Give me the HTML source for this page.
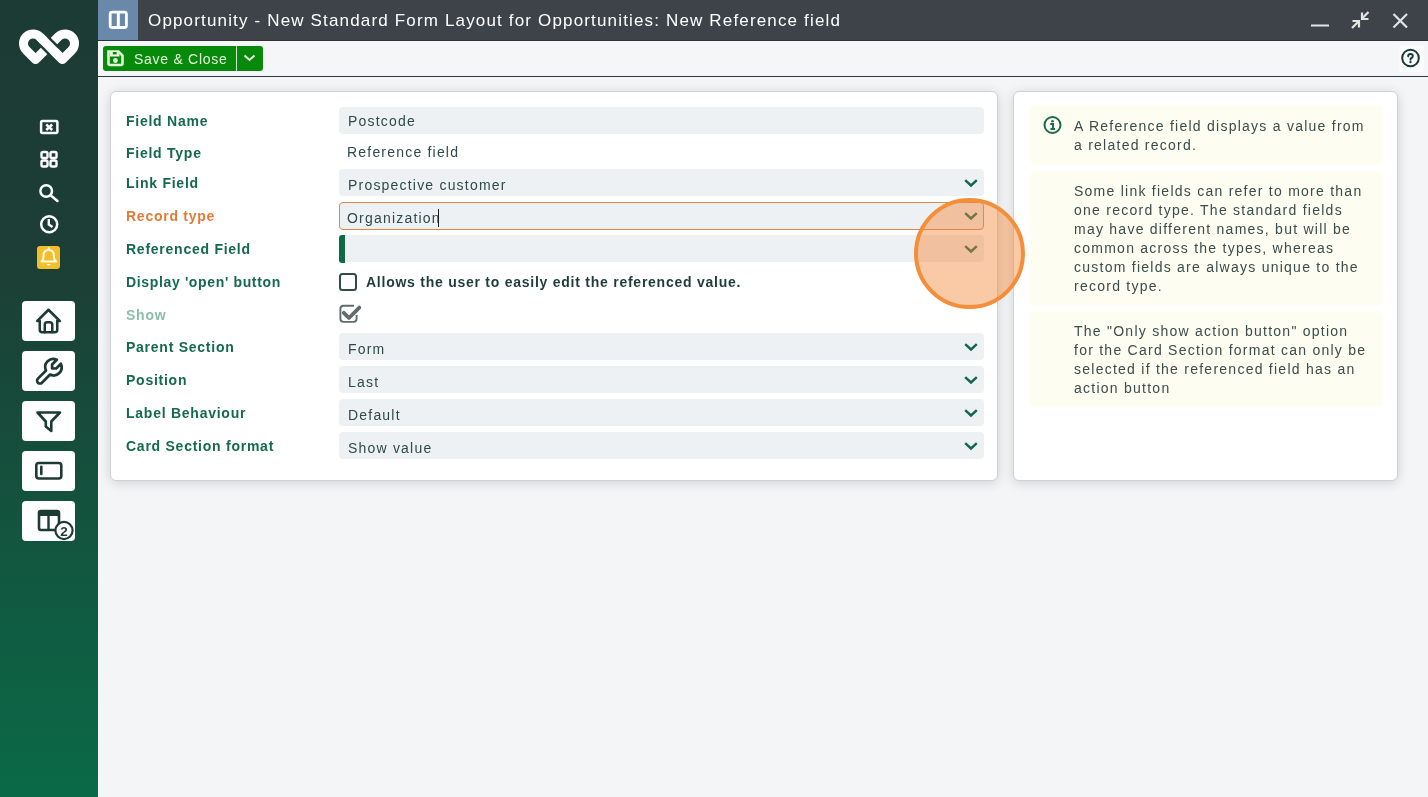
<!DOCTYPE html>
<html><head><meta charset="utf-8">
<style>
*{box-sizing:border-box;margin:0;padding:0}
html,body{width:1428px;height:797px;overflow:hidden;background:#f4f5f7;will-change:transform;font-family:"Liberation Sans",sans-serif}
.abs{position:absolute}
svg{position:absolute;overflow:visible}
#side{position:absolute;left:0;top:0;width:98px;height:797px;background:linear-gradient(#1c3b34 0%,#1c3e35 32%,#0a6a48 100%)}
.sbtn{position:absolute;left:22px;width:53px;height:40px;background:#fff;border-radius:4px}
#title{position:absolute;left:98px;top:0;width:1330px;height:40px;background:#3e434a}
#tblock{position:absolute;left:0;top:0;width:40px;height:40px;background:#6a88a9}
#ttext{position:absolute;left:50px;top:11px;color:#fff;font-size:17px;white-space:nowrap;letter-spacing:1.16px}
#toolbar{position:absolute;left:98px;top:40px;width:1330px;height:37px;background:#f5f6f7;border-top:1px solid #2e3434;border-bottom:1px solid #2e3a3a}
.btn{position:absolute;left:5px;top:5px;height:25px;width:160px;background:#078a0c;border-radius:3px}
.card{position:absolute;top:91px;height:390px;background:#fff;border:1px solid #cfd1d4;border-radius:6px;box-shadow:0 2px 12px rgba(0,0,0,.15)}
#c1{left:110px;width:888px}
#c2{left:1013px;width:385px}
.lab{position:absolute;left:126px;font-size:14px;font-weight:bold;color:#156a4c;white-space:nowrap;line-height:16px;letter-spacing:0.75px}
.inp{position:absolute;left:339px;width:645px;height:27px;background:#eef1f4;border-radius:4px}
.val{position:absolute;left:348px;font-size:14px;color:#2f4a4a;white-space:nowrap;line-height:16px;letter-spacing:1.2px}
.chev{position:absolute;left:964px;width:14px;height:8px}
.note{position:absolute;left:1030px;width:352px;background:#fdfdf1;border-radius:6px;box-shadow:0 0 3px 1px #fdfdf4}
.nt{position:absolute;left:1074px;font-size:14px;line-height:19px;color:#3b4d4c;white-space:nowrap;letter-spacing:1.25px}
</style></head><body>
<div id="side">
<svg width="98" height="80" style="left:0;top:0.8px">
<path d="M35.57,58.5 L26.28,49.22 A9.5,9.5 0 0 1 39.72,35.78 L62.43,58.5 L71.72,49.22 A9.5,9.5 0 0 0 58.28,35.78 Z" fill="none" stroke="#fff" stroke-width="9" stroke-linejoin="round"/>
<path d="M44,40 L54,50" stroke="#1c3b34" stroke-width="14"/>
<path d="M40,36 L62.43,58.5" stroke="#fff" stroke-width="9"/>
</svg>

<svg width="98" height="300" style="left:0;top:0">
<rect x="41.1" y="121.1" width="16.3" height="11.8" rx="1.5" fill="none" stroke="#fff" stroke-width="2.5"/>
<path d="M46.2,124.5 L52.2,130 M52.2,124.5 L46.2,130" stroke="#fff" stroke-width="2.5"/>
<rect x="41.5" y="152" width="6" height="6" rx="1.5" fill="none" stroke="#fff" stroke-width="2.4"/>
<rect x="50.5" y="152" width="6" height="6" rx="1.5" fill="none" stroke="#fff" stroke-width="2.4"/>
<rect x="41.5" y="160.5" width="6" height="6" rx="1.5" fill="none" stroke="#fff" stroke-width="2.4"/>
<rect x="50.5" y="160.5" width="6" height="6" rx="1.5" fill="none" stroke="#fff" stroke-width="2.4"/>
<circle cx="46.2" cy="191" r="5.8" fill="none" stroke="#fff" stroke-width="2.5"/>
<path d="M50.5,195.3 L57.5,201" stroke="#fff" stroke-width="2.5" stroke-linecap="round"/>
<circle cx="49.2" cy="224.2" r="8" fill="none" stroke="#fff" stroke-width="2.5"/>
<path d="M48.8,219 V224.5 L52.5,227" fill="none" stroke="#fff" stroke-width="2.4"/>
<rect x="37" y="246" width="23" height="23" rx="3" fill="#f2be2c"/>
<path d="M41.5,261.5 Q43.6,259.5 43.6,256 V255.3 Q43.6,250 48.7,250 Q53.8,250 53.8,255.3 V256 Q53.8,259.5 56,261.5 Z" fill="none" stroke="#fffbe0" stroke-width="2" stroke-linejoin="round"/>
<path d="M48.7,248.3 V250" stroke="#fffbe0" stroke-width="2" stroke-linecap="round"/>
<path d="M46.3,264 Q48.7,267 51.1,264 Z" fill="#fffbe0"/>
</svg>
<div class="sbtn" style="top:301px"></div>
<div class="sbtn" style="top:351px"></div>
<div class="sbtn" style="top:401px"></div>
<div class="sbtn" style="top:451px"></div>
<div class="sbtn" style="top:501px"></div>
<svg width="98" height="560" style="left:0;top:0">
<g fill="none" stroke="#1e3a35" stroke-width="2.5" stroke-linejoin="round" stroke-linecap="round">
<g transform="translate(33.5,306) scale(1.25)" stroke-width="2"><path d="M5 12l-2 0l9 -9l9 9l-2 0"/><path d="M5 12v7a2 2 0 0 0 2 2h10a2 2 0 0 0 2 -2v-7"/><path d="M9 21v-6a2 2 0 0 1 2 -2h2a2 2 0 0 1 2 2v6"/></g>
<g transform="translate(65.6,355) scale(-1.35,1.35)" stroke-width="2"><path d="M7 10h3v-3l-3.5 -3.5a6 6 0 0 1 8 8l6 6a2 2 0 0 1 -3 3l-6 -6a6 6 0 0 1 -8 -8l3.5 3.5"/></g>
<path d="M37.5,412.5 H60 L51.3,421.5 V431 L45.8,426.5 V421.5 Z" stroke-width="2.6"/>
<rect x="36.3" y="463" width="25" height="15.5" rx="2.5" stroke-width="2.6"/>
<path d="M41.3,466.8 V474" stroke-width="2.6"/>
</g>
<rect x="39" y="511" width="20" height="19" rx="2" fill="none" stroke="#1e3a35" stroke-width="2.6"/>
<rect x="39" y="511" width="20" height="5" fill="#1e3a35"/>
<path d="M48.5,515 V530" stroke="#1e3a35" stroke-width="2.4"/>
<circle cx="64" cy="530.5" r="8.6" fill="#fff" stroke="#1e3a35" stroke-width="2.2"/>
<text x="64" y="535.5" font-family="Liberation Sans" font-weight="bold" font-size="13.5" fill="#1e3a35" text-anchor="middle">2</text>
</svg>
</div>
<div id="title"><div id="tblock"></div><svg width="1330" height="40" style="left:0;top:0">
<rect x="12.2" y="12.1" width="16.2" height="15.4" rx="2" fill="none" stroke="#fff" stroke-width="2.8"/>
<path d="M20.3,12 V27" stroke="#fff" stroke-width="3"/>
<path d="M1213,25.5 H1231" stroke="#e4e4e4" stroke-width="2"/>
<g stroke="#e4e4e4" stroke-width="2.2" fill="none">
<path d="M1254,28 L1260.5,21.5 M1254.5,21 H1261 V27.5"/>
<path d="M1270.5,12 L1264,18.5 M1264,12.5 V19 H1270.5"/>
<path d="M1295.5,14 L1309,27.5 M1309,14 L1295.5,27.5"/>
</g>
</svg><div id="ttext">Opportunity - New Standard Form Layout for Opportunities: New Reference field</div></div>
<div id="toolbar"><div class="btn"></div>
<div class="abs" style="left:138px;top:5px;width:1px;height:25px;background:#cfe9c8"></div>
<svg width="200" height="38" style="left:0;top:0">
<path d="M10.5,10.5 H20.5 L24.5,14.5 V22.5 Q24.5,24 23,24 H12 Q10.5,24 10.5,22.5 Z" fill="none" stroke="#e2f8d8" stroke-width="2.6"/>
<path d="M12,11 H21.5 V15.5 H12 Z" fill="#e2f8d8"/>
<rect x="14.8" y="11" width="3.8" height="2.4" fill="#078a0c"/>
<circle cx="17.4" cy="19.5" r="2.4" fill="#e2f8d8"/>
<path d="M146.5,14.5 L151.5,19 L156.5,14.5" fill="none" stroke="#e6f7da" stroke-width="2"/>
<rect x="1301.5" y="5" width="24.5" height="26" fill="#fcfdfd"/>
<circle cx="1312.5" cy="17" r="8.3" fill="none" stroke="#1d3a38" stroke-width="2"/>
<path d="M1310.2,15.2 Q1310.2,13 1312.5,13 Q1314.8,13 1314.8,15 Q1314.8,16.3 1313.5,17 Q1312.5,17.5 1312.5,18.7" fill="none" stroke="#1d3a38" stroke-width="2" stroke-linecap="round"/>
<circle cx="1312.5" cy="21.1" r="1.2" fill="#1d3a38"/>
</svg>
<div class="tx" style="position:absolute;left:36px;top:9.5px;font-size:14px;color:#e2f8d8;letter-spacing:0.72px;white-space:nowrap">Save &amp; Close</div></div>
<div class="card" id="c1"></div>
<div class="card" id="c2"></div>

<div class="lab" style="top:113px">Field Name</div>
<div class="lab" style="top:145px">Field Type</div>
<div class="lab" style="top:175px">Link Field</div>
<div class="lab" style="top:208px;color:#e07b39">Record type</div>
<div class="lab" style="top:241px">Referenced Field</div>
<div class="lab" style="top:274px;letter-spacing:0.65px">Display 'open' button</div>
<div class="lab" style="top:307px;color:#8cbfa9">Show</div>
<div class="lab" style="top:339px">Parent Section</div>
<div class="lab" style="top:372px">Position</div>
<div class="lab" style="top:405px">Label Behaviour</div>
<div class="lab" style="top:438px">Card Section format</div>

<div class="inp" style="top:107px"></div>
<div class="val" style="top:113px">Postcode</div>
<div class="val" style="top:144px;left:347px">Reference field</div>
<div class="inp" style="top:169px"></div>
<div class="val" style="top:177px">Prospective customer</div>
<div class="inp" style="top:202px;height:28px;border:1px solid #d98a4c"></div>
<div class="val" style="top:210px;left:347px">Organization</div>
<div class="inp" style="top:235px"></div>
<div class="inp" style="top:333px"></div>
<div class="val" style="top:341px">Form</div>
<div class="inp" style="top:366px"></div>
<div class="val" style="top:374px">Last</div>
<div class="inp" style="top:399px"></div>
<div class="val" style="top:407px">Default</div>
<div class="inp" style="top:432px"></div>
<div class="val" style="top:440px">Show value</div>

<div class="note" style="top:106px;height:58px"></div>
<div class="note" style="top:172px;height:133px"></div>
<div class="note" style="top:312px;height:94px"></div>
<div class="nt" style="top:117px">A Reference field displays a value from<br>a related record.</div>
<div class="nt" style="top:181.5px">Some link fields can refer to more than<br>one record type. The standard fields<br>may have different names, but will be<br>common across the types, whereas<br>custom fields are always unique to the<br>record type.</div>
<div class="nt" style="top:321.5px">The "Only show action button" option<br>for the Card Section format can only be<br>selected if the referenced field has an<br>action button</div>

<div class="lab" style="top:274px;left:366px;color:#1f3b3a">Allows the user to easily edit the referenced value.</div>
<div class="abs" style="left:339px;top:235px;width:6px;height:28px;background:#0d6b45;border-radius:3px 0 0 3px"></div>
<div class="abs" style="left:438px;top:209px;width:1.2px;height:17.5px;background:#1a1a1a"></div>
<div class="abs" style="left:339px;top:273px;width:18px;height:18px;border:2px solid #334a4a;border-radius:3.5px"></div>
<svg width="24" height="24" style="left:339px;top:304px">
<path d="M15,1.8 H4.5 Q1.4,1.8 1.4,4.9 V14.8 Q1.4,17.9 4.5,17.9 H14.5 Q17.6,17.9 17.6,14.8 V11" fill="none" stroke="#606d6c" stroke-width="1.9"/>
<path d="M4.8,8.8 L10,14 L20.3,3.6" fill="none" stroke="#606d6c" stroke-width="3.8" stroke-linecap="round" stroke-linejoin="round"/>
</svg>
<svg width="14" height="8" style="left:964px;top:178.5px"><path d="M1.2,1.2 L7,6.5 L12.8,1.2" fill="none" stroke="#11674a" stroke-width="2.4"/></svg>
<svg width="14" height="8" style="left:964px;top:211.5px"><path d="M1.2,1.2 L7,6.5 L12.8,1.2" fill="none" stroke="#11674a" stroke-width="2.4"/></svg>
<svg width="14" height="8" style="left:964px;top:244.5px"><path d="M1.2,1.2 L7,6.5 L12.8,1.2" fill="none" stroke="#11674a" stroke-width="2.4"/></svg>
<svg width="14" height="8" style="left:964px;top:342.5px"><path d="M1.2,1.2 L7,6.5 L12.8,1.2" fill="none" stroke="#11674a" stroke-width="2.4"/></svg>
<svg width="14" height="8" style="left:964px;top:375.5px"><path d="M1.2,1.2 L7,6.5 L12.8,1.2" fill="none" stroke="#11674a" stroke-width="2.4"/></svg>
<svg width="14" height="8" style="left:964px;top:408.5px"><path d="M1.2,1.2 L7,6.5 L12.8,1.2" fill="none" stroke="#11674a" stroke-width="2.4"/></svg>
<svg width="14" height="8" style="left:964px;top:441.5px"><path d="M1.2,1.2 L7,6.5 L12.8,1.2" fill="none" stroke="#11674a" stroke-width="2.4"/></svg>

<svg width="24" height="24" style="left:1041px;top:113px">
<circle cx="11.5" cy="12" r="8" fill="none" stroke="#1b6a4f" stroke-width="2"/>
<circle cx="11.5" cy="8.3" r="1.3" fill="#1b6a4f"/>
<path d="M9.3,11 H12 V16 M9.5,16 H14" fill="none" stroke="#1b6a4f" stroke-width="1.9"/>
</svg>
<div class="abs" style="left:914px;top:198px;width:111px;height:111px;border-radius:50%;border:4.5px solid #f38e3a;background:rgba(245,135,55,0.45)"></div>
</body></html>
